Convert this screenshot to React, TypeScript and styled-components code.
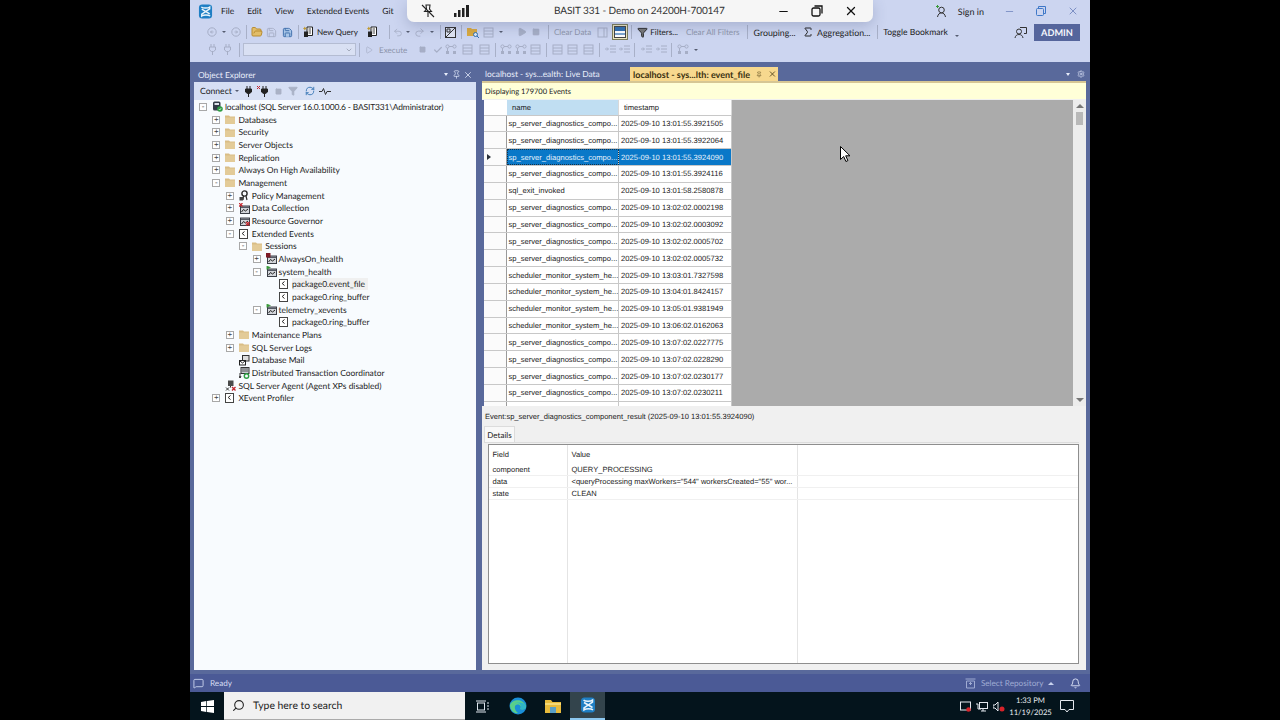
import { FC, ReactNode } from "react";
import styled, { createGlobalStyle } from "styled-components";
import {
  Bell,
  Check,
  ChevronDown,
  Filter,
  FolderOpen,
  Minus,
  MessageSquare,
  Pin,
  Play,
  Redo2,
  RefreshCw,
  Save,
  Search,
  Settings,
  Sigma,
  Square,
  Undo2,
  X,
} from "lucide-react";

const uiFont = `Lato, "Open Sans", "Noto Sans", "Liberation Sans", sans-serif`;
const gridFont = `"Liberation Sans", Arial, sans-serif`;
const dim = "#a6aec6";

const GlobalStyle = createGlobalStyle`
  html, body { margin: 0; padding: 0; background: #000; overflow: hidden; text-rendering: geometricPrecision; }
  * { box-sizing: border-box; }
`;

type NodeIcon = "folder" | "server" | "policy" | "collect" | "governor" | "xe" | "session" | "stopped" | "target" | "mail" | "dtc" | "agent";

type TreeItem = { label: string; depth: number; toggle?: "+" | "-"; icon: NodeIcon; active?: boolean };

const treeItems: TreeItem[] = [
  { label: "localhost (SQL Server 16.0.1000.6 - BASIT331\\Administrator)", depth: 0, toggle: "-", icon: "server" },
  { label: "Databases", depth: 1, toggle: "+", icon: "folder" },
  { label: "Security", depth: 1, toggle: "+", icon: "folder" },
  { label: "Server Objects", depth: 1, toggle: "+", icon: "folder" },
  { label: "Replication", depth: 1, toggle: "+", icon: "folder" },
  { label: "Always On High Availability", depth: 1, toggle: "+", icon: "folder" },
  { label: "Management", depth: 1, toggle: "-", icon: "folder" },
  { label: "Policy Management", depth: 2, toggle: "+", icon: "policy" },
  { label: "Data Collection", depth: 2, toggle: "+", icon: "collect" },
  { label: "Resource Governor", depth: 2, toggle: "+", icon: "governor" },
  { label: "Extended Events", depth: 2, toggle: "-", icon: "xe" },
  { label: "Sessions", depth: 3, toggle: "-", icon: "folder" },
  { label: "AlwaysOn_health", depth: 4, toggle: "+", icon: "stopped" },
  { label: "system_health", depth: 4, toggle: "-", icon: "session" },
  { label: "package0.event_file", depth: 5, icon: "target", active: true },
  { label: "package0.ring_buffer", depth: 5, icon: "target" },
  { label: "telemetry_xevents", depth: 4, toggle: "-", icon: "session" },
  { label: "package0.ring_buffer", depth: 5, icon: "target" },
  { label: "Maintenance Plans", depth: 2, toggle: "+", icon: "folder" },
  { label: "SQL Server Logs", depth: 2, toggle: "+", icon: "folder" },
  { label: "Database Mail", depth: 2, icon: "mail" },
  { label: "Distributed Transaction Coordinator", depth: 2, icon: "dtc" },
  { label: "SQL Server Agent (Agent XPs disabled)", depth: 1, icon: "agent" },
  { label: "XEvent Profiler", depth: 1, toggle: "+", icon: "xe" },
];

const sp = "sp_server_diagnostics_compo...";
const sched = "scheduler_monitor_system_he...";

const events = [
  [sp, "2025-09-10 13:01:55.3921505"],
  [sp, "2025-09-10 13:01:55.3922064"],
  [sp, "2025-09-10 13:01:55.3924090"],
  [sp, "2025-09-10 13:01:55.3924116"],
  ["sql_exit_invoked", "2025-09-10 13:01:58.2580878"],
  [sp, "2025-09-10 13:02:02.0002198"],
  [sp, "2025-09-10 13:02:02.0003092"],
  [sp, "2025-09-10 13:02:02.0005702"],
  [sp, "2025-09-10 13:02:02.0005732"],
  [sched, "2025-09-10 13:03:01.7327598"],
  [sched, "2025-09-10 13:04:01.8424157"],
  [sched, "2025-09-10 13:05:01.9381949"],
  [sched, "2025-09-10 13:06:02.0162063"],
  [sp, "2025-09-10 13:07:02.0227775"],
  [sp, "2025-09-10 13:07:02.0228290"],
  [sp, "2025-09-10 13:07:02.0230177"],
  [sp, "2025-09-10 13:07:02.0230211"],
  ["", ""],
];

const fields = [
  ["component", "QUERY_PROCESSING"],
  ["data", `<queryProcessing maxWorkers="544" workersCreated="55" wor...`],
  ["state", "CLEAN"],
];

const TreeIcon: FC<{ kind: NodeIcon }> = ({ kind }) => {
  if (kind === "folder")
    return (
      <svg width="10" height="9" viewBox="0 0 10 9">
        <path d="M0 0.5h4l1 1h5v7.5H0z" fill="#d9bd85" />
        <path d="M0 2.5h10v6.5H0z" fill="#e3cb98" />
      </svg>
    );
  if (kind === "server")
    return (
      <svg width="11" height="11" viewBox="0 0 11 11">
        <rect x="1" y="0.5" width="7.5" height="9" rx="1.5" fill="#333b47" />
        <rect x="2.5" y="2" width="4.5" height="2" fill="#dfe3ea" />
        <circle cx="8" cy="8" r="2.8" fill="#2f9e44" />
        <path d="M6.8 8l1 1 1.3-1.8" stroke="#fff" strokeWidth="0.7" fill="none" />
      </svg>
    );
  if (kind === "policy")
    return (
      <svg width="10" height="11" viewBox="0 0 10 11">
        <circle cx="5.5" cy="3.5" r="2.6" fill="none" stroke="#2c2c2c" strokeWidth="1.4" />
        <path d="M4.5 6L4 10M7 6l1 4" stroke="#2c2c2c" strokeWidth="1.2" />
        <rect x="0.5" y="7" width="3.5" height="3.5" fill="#444" />
      </svg>
    );
  if (kind === "collect" || kind === "governor" || kind === "session" || kind === "stopped")
    return (
      <svg width="11" height="11" viewBox="0 0 11 11">
        <rect x="1.5" y="3" width="9" height="7.5" fill="#d2d5da" stroke="#3a3e46" />
        <rect x="2" y="3.5" width="8" height="1.5" fill="#555a64" />
        <path d="M2.5 9l2-2.5 2 1.5 2.5-2" stroke="#222" fill="none" />
        {kind === "session" && <path d="M1 0v4M1 0l3.5 1.5L1 3z" fill="#3a9a3a" stroke="#3a9a3a" strokeWidth="0.5" />}
        {kind === "stopped" && <rect x="0" y="0" width="4.5" height="4.5" fill="#7d1a26" />}
        {kind === "collect" && <path d="M0 0l3.5 3.5M3.5 0L0 3.5" stroke="#c4262e" strokeWidth="1.2" />}
        {kind === "governor" && <path d="M7 7l3.5 3.5M10.5 7L7 10.5" stroke="#c4262e" strokeWidth="1.3" />}
      </svg>
    );
  if (kind === "xe" || kind === "target")
    return (
      <svg width="9" height="10" viewBox="0 0 9 10">
        <rect x="0.5" y="0.5" width="8" height="9" fill="#fff" stroke="#444" />
        <path d="M5.5 2.5L3.2 4.5l2.3 2" stroke="#222" fill="none" />
      </svg>
    );
  if (kind === "mail")
    return (
      <svg width="11" height="11" viewBox="0 0 11 11">
        <rect x="3.5" y="0.5" width="6.5" height="5.5" fill="#ddd" stroke="#333" />
        <rect x="0.5" y="5.5" width="6" height="4.5" fill="#fff" stroke="#222" />
        <path d="M1 6l2.5 2L6 6" stroke="#222" fill="none" />
      </svg>
    );
  if (kind === "dtc")
    return (
      <svg width="11" height="12" viewBox="0 0 11 12">
        <rect x="2" y="0.5" width="8" height="6" fill="#c8ccd2" stroke="#333" />
        <path d="M3 2h6M3 4h6" stroke="#555" />
        <path d="M1 6v5M0 9l1 2 1-2" stroke="#333" fill="none" />
        <circle cx="7.5" cy="9" r="2.2" fill="none" stroke="#2f9e44" strokeWidth="1.4" />
      </svg>
    );
  return (
    <svg width="11" height="11" viewBox="0 0 11 11">
      <rect x="3" y="0.5" width="5.5" height="5.5" fill="#4a4a4a" />
      <path d="M5.5 6v1.5M1 10.5l3-3M4 10.5l-3-3" stroke="#333" />
      <path d="M7 7l3.5 3.5M10.5 7L7 10.5" stroke="#c4262e" strokeWidth="1.3" />
    </svg>
  );
};

const SsmsLogo: FC<{ size: number }> = ({ size }) => (
  <svg width={size} height={size} viewBox="0 0 16 16">
    <rect x="1" y="0.5" width="14" height="15" rx="3.5" fill="#1f7fc4" />
    <path d="M3.5 3.2c2 1.5 7 1.5 9 0v2L4 10.8v2c2-1.5 7-1.5 9 0" stroke="#eaf5fc" strokeWidth="1.5" fill="none" />
    <path d="M4 5.5L12.5 10.5" stroke="#eaf5fc" strokeWidth="1.5" fill="none" />
  </svg>
);

const Ic: FC<{ w?: number; children: ReactNode }> = ({ w = 16, children }) => <IconSlot $w={w}>{children}</IconSlot>;

const DimGrid: FC<{ color?: string }> = ({ color = dim }) => (
  <svg width="11" height="11" viewBox="0 0 11 11">
    <rect x="1" y="1" width="9" height="9" fill="none" stroke={color} />
    <path d="M1 4h9M1 7h9" stroke={color} />
  </svg>
);

const DimNodes = () => (
  <svg width="12" height="11" viewBox="0 0 12 11">
    <circle cx="2.5" cy="2.5" r="1.6" fill="none" stroke={dim} />
    <circle cx="9.5" cy="2.5" r="1.6" fill="none" stroke={dim} />
    <rect x="1" y="7" width="3" height="3" fill={dim} />
    <rect x="8" y="7" width="3" height="3" fill={dim} />
    <path d="M4 2.5h4M2.5 4v3" stroke={dim} />
  </svg>
);

const DimIndent = () => (
  <svg width="11" height="10" viewBox="0 0 11 10">
    <path d="M5 1h6M5 4h6M5 7h6M0 4h3M2 2.5L3.5 4 2 5.5" stroke={dim} fill="none" />
  </svg>
);

const PageIcon = () => (
  <svg width="11" height="12" viewBox="0 0 11 12">
    <path d="M4 1h5.5v8.5H4z" fill="#fff" stroke="#222" />
    <path d="M5.5 3h2.5M5.5 5h2.5M5.5 7h2.5" stroke="#444" />
    <rect x="1" y="5.5" width="4" height="5.5" fill="#222" />
    <path d="M1.8 0.5l.7 1.3 1.3.7-1.3.7-.7 1.3-.7-1.3L0 2.5l1.1-.7z" fill="#c09a30" />
  </svg>
);

const PlugIcon: FC<{ color: string; solid?: boolean; size?: number }> = ({ color, solid, size = 9 }) => (
  <svg width={size} height={size + 2} viewBox="0 0 9 11">
    <path d="M3 0v3M6 0v3" stroke={color} />
    <path d="M1.5 3h6v3l-2 1.5h-2l-2-1.5zM4.5 7V11" stroke={color} fill={solid ? color : "none"} />
  </svg>
);

const App: FC = () => (
  <Page>
    <GlobalStyle />
    <Screen>
      <MenuBar>
        <LogoSlot>
          <SsmsLogo size={15} />
        </LogoSlot>
        <MenuItem>File</MenuItem>
        <MenuItem>Edit</MenuItem>
        <MenuItem>View</MenuItem>
        <MenuItem>Extended Events</MenuItem>
        <MenuItem>Git</MenuItem>
        <Spacer />
        <SignIn>
          <svg width="13" height="13" viewBox="0 0 13 13">
            <circle cx="6.5" cy="5" r="2.8" fill="none" stroke="#333" />
            <path d="M2.5 12c.6-3 2-4 4-4s3.4 1 4 4" fill="none" stroke="#333" />
            <path d="M1 1.5h3M2.5 0v3" stroke="#3a9a3a" />
          </svg>
          Sign in
        </SignIn>
        <WinControls>
          <Minus size={11} color="#7c8fc4" />
          <svg width="10" height="10" viewBox="0 0 10 10">
            <rect x="0.5" y="2.5" width="7" height="7" rx="1" fill="none" stroke="#3f78c8" />
            <path d="M2.5 2.5v-2h7v7h-2" fill="none" stroke="#3f78c8" />
          </svg>
          <X size={12} color="#7c8fc4" />
        </WinControls>
      </MenuBar>

      <RemoteBar>
        <RemoteIcon $left={14}>
          <svg width="14" height="14" viewBox="0 0 14 14">
            <path d="M5 1h4l-.5 4 2 2.5h-7l2-2.5zM7 7.5V13" fill="none" stroke="#222" strokeWidth="1.1" />
            <path d="M1 1l12 12" stroke="#222" strokeWidth="1.1" />
          </svg>
        </RemoteIcon>
        <RemoteIcon $left={12}>
          <svg width="18" height="14" viewBox="0 0 18 14">
            <path d="M1 9h2.5v4H1zM5 6h2.5v7H5zM9 4h2.5v9H9zM13 1h3v12h-3z" fill="#222" />
          </svg>
        </RemoteIcon>
        <RemoteTitle>BASIT 331 - Demo on 24200H-700147</RemoteTitle>
        <RemoteActions>
          <Minus size={13} color="#111" strokeWidth={2} />
          <svg width="12" height="12" viewBox="0 0 12 12">
            <rect x="1" y="3" width="8" height="8" rx="1.5" fill="none" stroke="#111" strokeWidth="1.3" />
            <path d="M3.5 1h7.5v7.5" fill="none" stroke="#111" strokeWidth="1.3" />
          </svg>
          <X size={14} color="#111" strokeWidth={2.2} />
        </RemoteActions>
      </RemoteBar>

      <ToolRow>
        <GripMark />
        <Ic w={14}><svg width="10" height="10" viewBox="0 0 10 10"><circle cx="5" cy="5" r="4.2" fill="none" stroke={dim} /><path d="M6.5 5h-3M5 3.5L3.5 5 5 6.5" stroke={dim} fill="none" /></svg></Ic>
        <DropMark />
        <Ic w={14}><svg width="10" height="10" viewBox="0 0 10 10"><circle cx="5" cy="5" r="4.2" fill="none" stroke={dim} /><path d="M3.5 5h3M5 3.5L6.5 5 5 6.5" stroke={dim} fill="none" /></svg></Ic>
        <Sep />
        <Ic w={13}><FolderOpen size={12} color="#b88c30" fill="#e2bd69" /></Ic>
        <Ic w={16}><Save size={11} color={dim} /></Ic>
        <Ic w={16}><Save size={11} color="#3a6aa8" fill="#a9c6e8" /></Ic>
        <Sep />
        <Ic w={13}><PageIcon /></Ic>
        <ToolLabel>New Query</ToolLabel>
        <Ic w={26}><PageIcon /></Ic>
        <Sep />
        <Ic w={10}><Undo2 size={11} color={dim} /></Ic>
        <DropMark />
        <Ic w={14}><Redo2 size={11} color={dim} /></Ic>
        <DropMark />
        <Sep />
        <Ic w={14}>
          <svg width="11" height="11" viewBox="0 0 11 11">
            <rect x="0.5" y="0.5" width="10" height="10" fill="#dfe4f2" stroke="#333" />
            <path d="M1 10L10 1M2 2h3v3H2z" stroke="#333" fill="none" />
          </svg>
        </Ic>
        <Sep />
        <Ic w={16}>
          <svg width="12" height="11" viewBox="0 0 12 11">
            <path d="M0 1h4l1 1h5v7H0z" fill="#d9a93f" />
            <circle cx="8.5" cy="7.5" r="2" fill="#dce8f6" stroke="#2f6fb0" />
            <path d="M10 9l2 2" stroke="#2f6fb0" />
          </svg>
        </Ic>
        <Ic w={15}><DimGrid /></Ic>
        <DropMark />
        <ToolGap $w={2} />
        <GripMark />
        <Ic w={10}><Play size={10} color={dim} fill={dim} /></Ic>
        <Ic w={18}><Square size={8} color={dim} fill={dim} /></Ic>
        <Sep />
        <ToolLabel $dim>Clear Data</ToolLabel>
        <Ic w={19}>
          <svg width="11" height="11" viewBox="0 0 11 11">
            <rect x="1" y="1" width="9" height="9" fill="none" stroke={dim} />
            <path d="M7 1v9" stroke={dim} />
          </svg>
        </Ic>
        <SelectedTool>
          <svg width="12" height="12" viewBox="0 0 12 12">
            <rect x="0.5" y="0.5" width="11" height="11" fill="#fff" stroke="#444" />
            <rect x="1" y="1" width="10" height="4" fill="#2f6fb0" />
            <rect x="1" y="7" width="10" height="2" fill="#7ea7d0" />
          </svg>
        </SelectedTool>
        <Sep />
        <Ic w={14}><Filter size={11} color="#222" fill="#777" /></Ic>
        <ToolLabel $l={1} $r={1}>Filters...</ToolLabel>
        <ToolLabel $dim $l={7} $r={4}>Clear All Filters</ToolLabel>
        <Sep />
        <ToolLabel $size={8.8} $l={3} $r={4.5}>Grouping...</ToolLabel>
        <Ic w={15}><Sigma size={12} color="#222" /></Ic>
        <ToolLabel $size={8.8} $r={4}>Aggregation...</ToolLabel>
        <Sep />
        <ToolLabel $size={8.55}>Toggle Bookmark</ToolLabel>
        <OverflowMark>
          <GripMark />
          <DropMark />
        </OverflowMark>
        <Spacer />
        <Ic w={16}>
          <svg width="13" height="13" viewBox="0 0 13 13">
            <circle cx="5" cy="5.5" r="2.5" fill="none" stroke="#333" />
            <path d="M1 12c.4-2.5 2-3.5 4-3.5s3.6 1 4 3.5M6 1.500h6.500v6H10" fill="none" stroke="#333" />
          </svg>
        </Ic>
        <AdminButton>ADMIN</AdminButton>
      </ToolRow>

      <LowerToolRow>
        <GripMark />
        <Ic w={14}><PlugIcon color={dim} /></Ic>
        <Ic w={17}><PlugIcon color={dim} /></Ic>
        <Sep />
        <Combo>
          <ChevronDown size={8} color="#8a90a0" />
        </Combo>
        <Sep />
        <Ic w={12}><Play size={8} color={dim} /></Ic>
        <ToolLabel $dim $l={4} $r={4}>Execute</ToolLabel>
        <Ic w={22}><Square size={7} color={dim} fill={dim} /></Ic>
        <Ic w={10}><Check size={10} color={dim} strokeWidth={3} /></Ic>
        <Ic w={16}><DimNodes /></Ic>
        <Ic w={17}><DimGrid /></Ic>
        <Ic w={16}><DimGrid /></Ic>
        <Sep />
        <Ic w={14}><DimNodes /></Ic>
        <Ic w={15}><DimNodes /></Ic>
        <Ic w={15}><DimGrid /></Ic>
        <Sep />
        <Ic w={14}><DimGrid /></Ic>
        <Ic w={17}><DimGrid /></Ic>
        <Ic w={15}><DimGrid /></Ic>
        <Sep />
        <Ic w={14}><DimIndent /></Ic>
        <Ic w={14}><DimIndent /></Ic>
        <Sep />
        <Ic w={16}><DimIndent /></Ic>
        <Ic w={14}><DimIndent /></Ic>
        <Sep />
        <Ic w={16}><DimNodes /></Ic>
        <DropMark />
      </LowerToolRow>

      <Body>
        <ExplorerPanel>
          <PanelHeader>
            <span>Object Explorer</span>
            <HeaderIcons>
              <HeaderDrop />
              <Pin size={9} color="#d8e0f4" />
              <X size={10} color="#d8e0f4" />
            </HeaderIcons>
          </PanelHeader>
          <ExplorerTools>
            <ConnectLabel>Connect</ConnectLabel>
            <DropMark />
            <Ic w={13}><PlugIcon color="#222" solid /></Ic>
            <Ic w={17}>
              <svg width="12" height="11" viewBox="0 0 12 11">
                <path d="M6 0v3M9 0v3" stroke="#222" />
                <path d="M4.5 3h6v3l-2 1.5h-2l-2-1.5zM7.5 7V11" fill="#222" stroke="#222" />
                <path d="M0 0l3 3M3 0L0 3" stroke="#c4262e" />
              </svg>
            </Ic>
            <Ic w={14}><Square size={7} color="#aab2c6" fill="#aab2c6" /></Ic>
            <Ic w={15}><Filter size={10} color="#aab2c6" fill="#aab2c6" /></Ic>
            <Ic w={18}><RefreshCw size={10} color="#2a6db0" /></Ic>
            <Ic w={13}>
              <svg width="12" height="9" viewBox="0 0 12 9">
                <path d="M0 4.5h3l1.5-3 2 6 1.5-3h4" fill="none" stroke="#333" />
              </svg>
            </Ic>
          </ExplorerTools>
          <Tree>
            {treeItems.map((item, i) => (
              <TreeRow key={i} $depth={item.depth}>
                <ToggleSlot>{item.toggle && <Toggle>{item.toggle}</Toggle>}</ToggleSlot>
                <NodeIconSlot>
                  <TreeIcon kind={item.icon} />
                </NodeIconSlot>
                <NodeLabel $active={item.active} $tight={item.depth === 0}>{item.label}</NodeLabel>
              </TreeRow>
            ))}
          </Tree>
        </ExplorerPanel>

        <DocumentPanel>
          <TabStrip>
            <Tab>localhost - sys...ealth: Live Data</Tab>
            <Tab $active>
              localhost - sys...lth: event_file
              <Pin size={7} color="#5a4a20" />
              <X size={10} color="#5a4a20" strokeWidth={2.5} />
            </Tab>
            <TabStripIcons>
              <HeaderDrop />
              <Settings size={8} color="#d8e0f4" />
            </TabStripIcons>
          </TabStrip>
          <InfoBar>Displaying 179700 Events</InfoBar>
          <GridArea>
            <EventGrid>
              <GridHead>
                <HeadCorner />
                <HeadCell $sorted>name</HeadCell>
                <HeadCell>timestamp</HeadCell>
              </GridHead>
              {events.map((row, i) => (
                <GridRow key={i}>
                  <RowHeader>{i === 2 && <RowMarker />}</RowHeader>
                  <Cell $selected={i === 2} $name>{row[0]}</Cell>
                  <Cell $selected={i === 2}>{row[1]}</Cell>
                </GridRow>
              ))}
            </EventGrid>
            <GridEmpty />
            <ScrollTrack>
              <ScrollArrow $up />
              <ScrollThumb />
              <Spacer />
              <ScrollArrow />
            </ScrollTrack>
          </GridArea>
          <DetailArea>
            <EventCaption>Event:sp_server_diagnostics_component_result (2025-09-10 13:01:55.3924090)</EventCaption>
            <DetailTabs>
              <DetailTab>Details</DetailTab>
            </DetailTabs>
            <FieldBox>
              <FieldRow $head>
                <FieldCell>Field</FieldCell>
                <FieldCell>Value</FieldCell>
                <FieldCell />
              </FieldRow>
              {fields.map(f => (
                <FieldRow key={f[0]}>
                  <FieldCell>{f[0]}</FieldCell>
                  <FieldCell>{f[1]}</FieldCell>
                  <FieldCell />
                </FieldRow>
              ))}
              <FieldRest>
                <FieldCell />
                <FieldCell />
                <FieldCell />
              </FieldRest>
            </FieldBox>
          </DetailArea>
        </DocumentPanel>
      </Body>

      <StatusBar>
        <MessageSquare size={11} color="#c8d2ee" />
        <ReadyText>Ready</ReadyText>
        <Spacer />
        <StatusRepo>
          <svg width="11" height="11" viewBox="0 0 11 11">
            <path d="M0.5 1h10M1.5 3h8v7h-8zM4 5.5h3M5.5 4v3" fill="none" stroke="#9fabd2" />
          </svg>
          Select Repository
          <StatusCaret />
        </StatusRepo>
        <Bell size={11} color="#dfe6f8" />
      </StatusBar>

      <Taskbar>
        <StartButton>
          <svg width="13" height="13" viewBox="0 0 13 13">
            <path d="M0 1.9l5.3-.8v5H0zM6 1l7-1v6.1H6zM0 6.9h5.3v5L0 11.1zM6 6.9h7V13l-7-1z" fill="#fff" />
          </svg>
        </StartButton>
        <SearchBox>
          <SearchGlyph size={13} color="#222" />
          Type here to search
        </SearchBox>
        <TaskIcon>
          <svg width="13" height="13" viewBox="0 0 13 13">
            <rect x="1.5" y="3" width="7" height="7" fill="none" stroke="#dfe6ee" />
            <path d="M0 1h10M0 12h10M11 3h2M11 6h2M11 9h2" stroke="#dfe6ee" />
          </svg>
        </TaskIcon>
        <TaskIcon>
          <svg width="18" height="18" viewBox="0 0 18 18">
            <circle cx="9" cy="9" r="8.5" fill="#1a8fd8" />
            <path d="M1 8C3 2 14 1 17 9c.5 3-3 4-6 3 2-2 0-5-3-4.5C5 8 5 13 9 16 5 17 1 13 1 8z" fill="#5ad08a" />
            <path d="M9 5.5c-3 0-5 2-5.5 4C5 5 11 5 12 9c0 1.5-1 2.5-1 3 3 1 6 0 6-3C16 6 12 5 9 5.5z" fill="#2fb6c8" />
          </svg>
        </TaskIcon>
        <TaskIcon>
          <svg width="16" height="14" viewBox="0 0 16 14">
            <path d="M0 1h6l1.5 2H16v11H0z" fill="#e8bb3c" />
            <path d="M0 4h16v2H0z" fill="#f5d976" />
            <rect x="5" y="8" width="6" height="6" fill="#5aa0c8" />
          </svg>
        </TaskIcon>
        <TaskIcon $active>
          <SsmsLogo size={16} />
        </TaskIcon>
        <Spacer />
        <Tray>
          <svg width="11" height="11" viewBox="0 0 11 11">
            <rect x="0.5" y="1" width="10" height="8" fill="none" stroke="#e4e8ee" />
            <circle cx="8.5" cy="8.5" r="2.3" fill="#d8232a" />
          </svg>
          <svg width="12" height="11" viewBox="0 0 12 11">
            <rect x="3.5" y="1.5" width="8" height="6" fill="none" stroke="#e4e8ee" />
            <path d="M0 3h2v5h3M7 8v2M5 10h5" stroke="#e4e8ee" fill="none" />
          </svg>
          <svg width="12" height="11" viewBox="0 0 12 11">
            <path d="M0 4h2l3-3v9L2 7H0z" fill="none" stroke="#e4e8ee" />
            <circle cx="9" cy="8" r="2.5" fill="#d8232a" />
          </svg>
        </Tray>
        <Clock>
          <span>1:33 PM</span>
          <span>11/19/2025</span>
        </Clock>
        <Notify>
          <svg width="14" height="13" viewBox="0 0 14 13">
            <path d="M.5.5h13v9H9l-2 2.5L5 9.5H.5z" fill="none" stroke="#e4e8ee" />
          </svg>
        </Notify>
      </Taskbar>

      <Cursor width="11" height="16" viewBox="0 0 11 16">
        <path d="M.5.5v13l3.2-3 2.2 5 2-.9-2.2-4.8h4.3z" fill="#fff" stroke="#000" />
      </Cursor>
    </Screen>
  </Page>
);

const Page = styled.div`
  width: 1280px;
  height: 720px;
  display: flex;
  justify-content: center;
  background: #000;
  overflow: hidden;
`;
const Screen = styled.div`
  position: relative;
  width: 900px;
  height: 720px;
  display: flex;
  flex-direction: column;
  background: #ccd5f0;
  font-family: ${uiFont};
  font-size: 8.5px;
  color: #222;
`;
const MenuBar = styled.div`
  display: flex;
  align-items: center;
  height: 22px;
  flex: none;
  background: #ccd5f0;
`;
const LogoSlot = styled.div`
  width: 31px;
  padding-left: 7.5px;
  display: flex;
`;
const MenuItem = styled.div`
  margin-right: 13px;
  font-size: 8.5px;
`;
const Spacer = styled.div`
  flex: 1;
`;
const SignIn = styled.div`
  display: flex;
  align-items: center;
  gap: 10px;
  font-size: 9px;
  margin-right: 20px;
`;
const WinControls = styled.div`
  display: flex;
  align-items: center;
  gap: 21px;
  width: 75px;
  margin-right: 11px;
`;
const RemoteBar = styled.div`
  position: absolute;
  left: 217px;
  top: 0;
  width: 466px;
  height: 22px;
  display: flex;
  align-items: center;
  background: #f6f6f6;
  border-radius: 0 0 7px 7px;
  box-shadow: 0 4px 14px rgba(60, 70, 110, 0.25);
`;
const RemoteIcon = styled.div<{ $left: number }>`
  display: flex;
  margin-left: ${p => p.$left}px;
  width: 20px;
`;
const RemoteTitle = styled.div`
  position: absolute;
  left: 147px;
  font-size: 10px;
  letter-spacing: -0.1px;
  color: #333;
`;
const RemoteActions = styled.div`
  position: absolute;
  right: 15px;
  display: flex;
  align-items: center;
  gap: 21px;
`;
const ToolRow = styled.div`
  display: flex;
  align-items: center;
  flex: none;
  height: 20px;
  padding: 0 10px 0 6px;
  background: #ccd5f0;
`;
const LowerToolRow = styled(ToolRow)`
  padding-bottom: 5px;
`;
const GripMark = styled.div`
  flex: none;
  width: 4px;
  height: 12px;
  margin-right: 5px;
  background-image: radial-gradient(#6e7690 0.6px, transparent 0.7px);
  background-size: 2px 2px;
`;
const IconSlot = styled.div<{ $w: number }>`
  width: ${p => p.$w}px;
  flex: none;
  display: flex;
  align-items: center;
  justify-content: center;
`;
const ToolGap = styled.div<{ $w: number }>`
  flex: none;
  width: ${p => p.$w}px;
`;
const DropMark = styled.div`
  flex: none;
  width: 0;
  height: 0;
  margin: 0 3px;
  border-left: 2.5px solid transparent;
  border-right: 2.5px solid transparent;
  border-top: 2.5px solid #555c70;
`;
const Sep = styled.div`
  flex: none;
  width: 1px;
  height: 14px;
  margin: 0 3px;
  background: #a8b0c8;
`;
const ToolLabel = styled.div<{ $dim?: boolean; $l?: number; $r?: number; $size?: number }>`
  flex: none;
  white-space: nowrap;
  font-size: ${p => p.$size ?? 8.1}px;
  margin: 0 ${p => p.$r ?? 2}px 0 ${p => p.$l ?? 2}px;
  color: ${p => (p.$dim ? "#8e96ac" : "#222")};
`;
const SelectedTool = styled.div`
  flex: none;
  width: 16px;
  height: 16px;
  display: flex;
  align-items: center;
  justify-content: center;
  background: #ece6c0;
  border: 1px solid #7c7c58;
`;
const OverflowMark = styled.div`
  flex: none;
  margin-left: 6px;
  height: 14px;
  display: flex;
  flex-direction: column;
  align-items: flex-start;
  gap: 2px;
  ${GripMark} {
    height: 8px;
    margin: 0;
  }
  ${DropMark} {
    margin: 0 -0.5px;
  }
`;
const AdminButton = styled.div`
  flex: none;
  width: 46px;
  height: 17px;
  margin-left: 6px;
  display: flex;
  align-items: center;
  justify-content: center;
  background: #55659c;
  color: #f4f6fc;
  font-size: 9.2px;
  font-weight: 700;
`;
const Combo = styled.div`
  flex: none;
  width: 113px;
  height: 13px;
  display: flex;
  align-items: center;
  justify-content: flex-end;
  padding-right: 2px;
  background: #d9e0f3;
  border: 1px solid #b4bcd2;
`;
const Body = styled.div`
  flex: 1;
  min-height: 0;
  display: flex;
  gap: 6px;
  padding: 5px 4px 4px;
  background: #59699b;
`;
const ExplorerPanel = styled.div`
  width: 282px;
  flex: none;
  display: flex;
  flex-direction: column;
`;
const PanelHeader = styled.div`
  height: 15px;
  flex: none;
  display: flex;
  align-items: center;
  justify-content: space-between;
  padding: 0 3px 0 4px;
  color: #e8edfa;
  font-size: 8.4px;
`;
const HeaderIcons = styled.div`
  display: flex;
  align-items: center;
  gap: 2px;
`;
const HeaderDrop = styled.div`
  width: 0;
  height: 0;
  margin-right: 2px;
  border-left: 2.5px solid transparent;
  border-right: 2.5px solid transparent;
  border-top: 3px solid #e8edfa;
`;
const ExplorerTools = styled.div`
  height: 18px;
  flex: none;
  display: flex;
  align-items: center;
  padding-left: 6px;
  background: #d6dff4;
`;
const ConnectLabel = styled.span`
  font-size: 8.6px;
`;
const Tree = styled.div`
  flex: 1;
  background: #f8fbfe;
  padding-top: 0.5px;
`;
const TreeRow = styled.div<{ $depth: number }>`
  height: 12.68px;
  display: flex;
  align-items: center;
  padding-left: ${p => 5 + p.$depth * 13.4}px;
`;
const ToggleSlot = styled.div`
  width: 13px;
  flex: none;
`;
const Toggle = styled.div`
  width: 8px;
  height: 8px;
  border: 1px solid #a8a8a8;
  background: #fff;
  color: #444;
  font-size: 8px;
  line-height: 6px;
  text-align: center;
  font-family: ${gridFont};
`;
const NodeIconSlot = styled.div`
  width: 13px;
  flex: none;
  display: flex;
  align-items: center;
`;
const NodeLabel = styled.div<{ $active?: boolean; $tight?: boolean }>`
  white-space: nowrap;
  font-size: 8.45px;
  letter-spacing: ${p => (p.$tight ? "-0.16px" : "0")};
  line-height: 12px;
  padding-right: 3px;
  background: ${p => (p.$active ? "#f0f0f0" : "transparent")};
`;
const DocumentPanel = styled.div`
  flex: 1;
  min-width: 0;
  display: flex;
  flex-direction: column;
`;
const TabStrip = styled.div`
  height: 14px;
  flex: none;
  display: flex;
  align-items: stretch;
  gap: 3px;
`;
const Tab = styled.div<{ $active?: boolean }>`
  display: flex;
  align-items: center;
  gap: 6px;
  padding: 0 1px 0 3px;
  width: ${p => (p.$active ? "148px" : "145px")};
  font-size: ${p => (p.$active ? "9px" : "8.4px")};
  font-weight: ${p => (p.$active ? 700 : 400)};
  color: ${p => (p.$active ? "#3a3010" : "#e8edfa")};
  background: ${p => (p.$active ? "#f7d88e" : "transparent")};
  white-space: nowrap;
`;
const TabStripIcons = styled.div`
  margin-left: auto;
  display: flex;
  align-items: center;
  gap: 5px;
  padding-right: 1px;
`;
const InfoBar = styled.div`
  height: 18px;
  flex: none;
  display: flex;
  align-items: center;
  padding-left: 3px;
  background: #ffffd8;
  border-top: 2px solid #d6c694;
  font-size: 7.5px;
`;
const GridArea = styled.div`
  height: 307px;
  flex: none;
  display: flex;
  overflow: hidden;
  padding-left: 2px;
  background: #59699b;
  border-top: 1px solid #f0f0f0;
`;
const EventGrid = styled.div`
  width: 248px;
  flex: none;
  background: #fff;
  font-family: ${gridFont};
  font-size: 7.6px;
  overflow: hidden;
`;
const GridHead = styled.div`
  display: grid;
  grid-template-columns: 23px 112px 113px;
  height: 14.5px;
`;
const HeadCorner = styled.div`
  background: #fff;
`;
const HeadCell = styled.div<{ $sorted?: boolean }>`
  display: flex;
  align-items: center;
  padding-left: 5px;
  background: ${p => (p.$sorted ? "#c0def2" : "#fff")};
  border-right: 1px solid #d8d8d8;
`;
const GridRow = styled.div`
  display: grid;
  grid-template-columns: 23px 112px 113px;
  height: 16.85px;
  border-top: 1px solid #c8c8c8;
`;
const RowHeader = styled.div`
  display: flex;
  align-items: center;
  padding-left: 3px;
  background: #fbfbfb;
  border-right: 1px solid #9a9a9a;
`;
const RowMarker = styled.div`
  width: 0;
  height: 0;
  border-top: 3px solid transparent;
  border-bottom: 3px solid transparent;
  border-left: 4px solid #2a3038;
`;
const Cell = styled.div<{ $selected?: boolean; $name?: boolean }>`
  display: flex;
  align-items: center;
  padding-left: ${p => (p.$name ? 1.5 : 2)}px;
  white-space: nowrap;
  overflow: hidden;
  color: ${p => (p.$selected ? "#e8f2fb" : "#222")};
  background: ${p => (p.$selected ? "#0a78c8" : "#fff")};
  border-right: 1px solid #c8c8c8;
  outline: ${p => (p.$selected && p.$name ? "1px dotted #12324a" : "0")};
  outline-offset: -1px;
`;
const GridEmpty = styled.div`
  flex: 1;
  background: #ababab;
`;
const ScrollTrack = styled.div`
  width: 13px;
  flex: none;
  display: flex;
  flex-direction: column;
  align-items: center;
  background: #ececec;
`;
const ScrollArrow = styled.div<{ $up?: boolean }>`
  flex: none;
  margin: 4px 0;
  width: 0;
  height: 0;
  border-left: 4px solid transparent;
  border-right: 4px solid transparent;
  ${p => (p.$up ? "border-bottom: 4px solid #777;" : "border-top: 4px solid #777;")}
`;
const ScrollThumb = styled.div`
  flex: none;
  width: 7px;
  height: 13px;
  background: #b8b8b8;
`;
const DetailArea = styled.div`
  flex: 1;
  min-height: 0;
  display: flex;
  flex-direction: column;
  padding: 0 7px 6px 2px;
  background: #f0f0f0;
  font-family: ${gridFont};
  font-size: 7.55px;
`;
const EventCaption = styled.div`
  flex: none;
  height: 20px;
  display: flex;
  align-items: center;
  padding-left: 1px;
`;
const DetailTabs = styled.div`
  flex: none;
  height: 17px;
  display: flex;
  border-bottom: 1px solid #dcdcdc;
`;
const DetailTab = styled.div`
  width: 31px;
  display: flex;
  align-items: center;
  justify-content: center;
  background: #f8f8f8;
  border: 1px solid #dcdcdc;
  border-bottom: 0;
  font-family: ${uiFont};
  font-size: 8px;
`;
const FieldBox = styled.div`
  flex: 1;
  min-height: 0;
  margin: 1px 0 0 4px;
  display: flex;
  flex-direction: column;
  background: #fff;
  border: 1px solid #8e8e8e;
`;
const FieldRow = styled.div<{ $head?: boolean }>`
  flex: none;
  display: grid;
  grid-template-columns: 79px 230px 1fr;
  height: ${p => (p.$head ? "19px" : "12px")};
  border-bottom: ${p => (p.$head ? "0" : "1px solid #f0f0f0")};
`;
const FieldRest = styled.div`
  flex: 1;
  display: grid;
  grid-template-columns: 79px 230px 1fr;
`;
const FieldCell = styled.div`
  display: flex;
  align-items: center;
  padding-left: 3.5px;
  white-space: nowrap;
  overflow: hidden;
  border-right: 1px solid #e4e4e4;
  &:last-child {
    border-right: 0;
  }
`;
const StatusBar = styled.div`
  height: 18px;
  flex: none;
  display: flex;
  align-items: center;
  gap: 6px;
  padding: 0 9px 0 3px;
  background: #4b5a96;
  color: #d4dcf2;
`;
const ReadyText = styled.span`
  font-size: 8.2px;
`;
const StatusRepo = styled.div`
  display: flex;
  align-items: center;
  gap: 4.5px;
  margin-right: 10px;
  font-size: 8.2px;
  color: #9fabd2;
`;
const StatusCaret = styled.div`
  width: 0;
  height: 0;
  border-left: 3px solid transparent;
  border-right: 3px solid transparent;
  border-bottom: 3px solid #c8d2ee;
`;
const Taskbar = styled.div`
  height: 28px;
  flex: none;
  display: flex;
  align-items: center;
  background: #04141c;
  color: #e8ecf0;
`;
const StartButton = styled.div`
  width: 34px;
  display: flex;
  justify-content: center;
`;
const SearchBox = styled.div`
  width: 241px;
  height: 28px;
  display: flex;
  align-items: center;
  gap: 8px;
  padding-left: 8px;
  background: #f1f1f1;
  border-bottom: 1px solid #aaa;
  color: #222;
  font-size: 10.4px;
`;
const SearchGlyph = styled(Search)`
  transform: scaleX(-1);
`;
const TaskIcon = styled.div<{ $active?: boolean }>`
  width: 35px;
  height: 28px;
  display: flex;
  align-items: center;
  justify-content: center;
  background: ${p => (p.$active ? "#33444c" : "transparent")};
  border-bottom: ${p => (p.$active ? "2px solid #8cc8f0" : "0")};
`;
const Tray = styled.div`
  display: flex;
  align-items: center;
  gap: 5px;
`;
const Clock = styled.div`
  width: 51px;
  display: flex;
  flex-direction: column;
  align-items: center;
  font-size: 7.7px;
  line-height: 12px;
`;
const Notify = styled.div`
  width: 22px;
  display: flex;
  justify-content: center;
  margin-right: 12px;
`;
const Cursor = styled.svg`
  position: absolute;
  left: 650px;
  top: 146px;
`;

export default App;
